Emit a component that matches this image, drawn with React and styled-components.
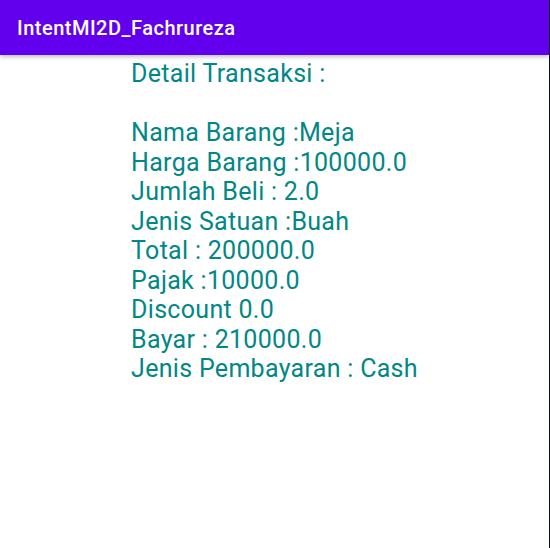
import React from 'react';
import styled, { createGlobalStyle } from 'styled-components';

const GlobalStyle = createGlobalStyle`
  html, body {
    margin: 0;
    padding: 0;
    background: #ffffff;
  }
  body {
    font-family: Roboto, "Noto Sans", sans-serif;
  }
`

const Screen = styled.div`
  width: 550px;
  height: 548px;
  box-sizing: border-box;
  border-right: 1px solid #0d0b1e;
  background: #ffffff;
  display: flex;
  flex-direction: column;
  overflow: hidden;
`

const AppBar = styled.header`
  height: 55px;
  flex-shrink: 0;
  background: #6200ee;
  display: flex;
  align-items: center;
  padding: 0 17px;
  box-shadow: 0 2px 4px rgba(0, 0, 0, 0.25);
  position: relative;
  z-index: 1;
`

const Title = styled.h1`
  margin: 0;
  color: #ffffff;
  font-family: Roboto, sans-serif;
  font-weight: 500;
  font-size: 20px;
  letter-spacing: 0.5px;
`

const Content = styled.main`
  flex: 1;
  display: flex;
  flex-direction: column;
  align-items: center;
  padding-top: 4px;
`

const Detail = styled.div`
  color: #018786;
  font-family: Roboto, sans-serif;
  font-size: 25px;
  line-height: 29.5px;
  letter-spacing: 0.3px;
  text-align: left;
  white-space: pre;
`

const lines = [
  'Detail Transaksi :',
  '',
  'Nama Barang :Meja',
  'Harga Barang :100000.0',
  'Jumlah Beli : 2.0',
  'Jenis Satuan :Buah',
  'Total : 200000.0',
  'Pajak :10000.0',
  'Discount 0.0',
  'Bayar : 210000.0',
  'Jenis Pembayaran : Cash',
]

export default function App() {
  return (
    <>
      <GlobalStyle />
      <Screen>
        <AppBar>
          <Title>IntentMI2D_Fachrureza</Title>
        </AppBar>
        <Content>
          <Detail>{lines.join('\n')}</Detail>
        </Content>
      </Screen>
    </>
  )
}
